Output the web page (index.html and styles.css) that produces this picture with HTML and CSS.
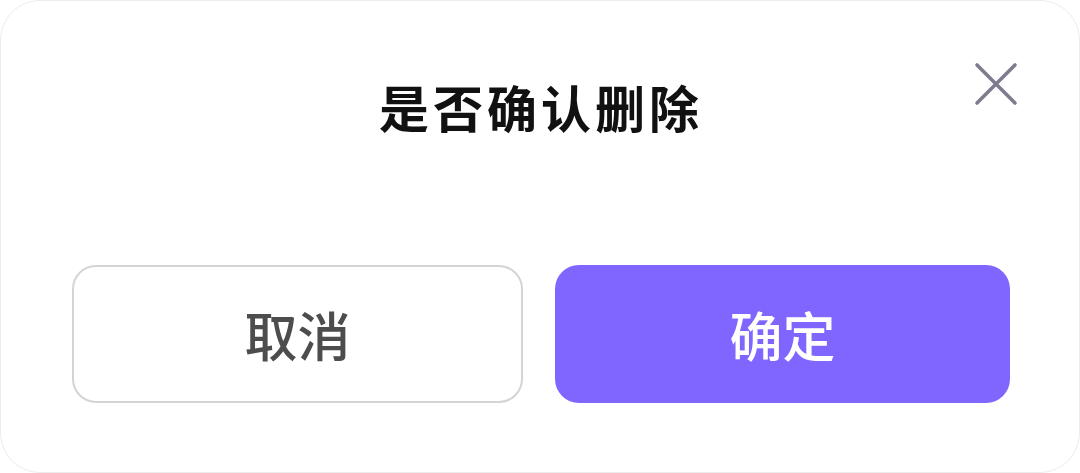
FILE: index.html
```html
<!DOCTYPE html>
<html lang="zh-CN">
<head>
<meta charset="utf-8">
<link rel="stylesheet" href="styles.css">
</head>
<body>
<div class="dialog">
  <button class="close" aria-label="关闭">
    <svg width="44" height="44" viewBox="0 0 44 44"><path d="M3 3 L41 41 M41 3 L3 41" stroke="#7f7b8e" stroke-width="3.6" stroke-linecap="round" fill="none"/></svg>
  </button>
  <h1 class="title">是否确认删除</h1>
  <div class="actions">
    <button class="btn btn-cancel">取消</button>
    <button class="btn btn-ok">确定</button>
  </div>
</div>
</body>
</html>
```
FILE: styles.css
```css
html, body {
  margin: 0;
  padding: 0;
  background: #ffffff;
}
.dialog {
  position: relative;
  box-sizing: border-box;
  width: 1080px;
  height: 473px;
  border: 1px solid #ececec;
  border-radius: 40px;
  background: #ffffff;
  display: flex;
  flex-direction: column;
  padding: 0 69px 0 71px;
  font-family: "Noto Sans CJK SC", "Noto Sans", sans-serif;
}
.close {
  position: absolute;
  top: 61px;
  right: 61px;
  width: 44px;
  height: 44px;
  padding: 0;
  border: 0;
  background: none;
  display: flex;
}
.title {
  margin: 73px 0 0 0;
  text-align: center;
  font-size: 50px;
  line-height: 64px;
  font-weight: 700;
  color: #111111;
  letter-spacing: 4px;
}
.actions {
  margin-top: 127px;
  display: grid;
  grid-template-columns: 451fr 455fr;
  gap: 32px;
}
.btn {
  height: 138px;
  box-sizing: border-box;
  border-radius: 24px;
  font-family: "Noto Sans CJK SC", "Noto Sans", sans-serif;
  font-size: 53px;
  font-weight: 500;
  padding: 0;
}
.btn-cancel {
  background: #ffffff;
  border: 2px solid #d4d4d4;
  color: #4d4d4d;
}
.btn-ok {
  background: #8066ff;
  border: 0;
  color: #ffffff;
}
```
